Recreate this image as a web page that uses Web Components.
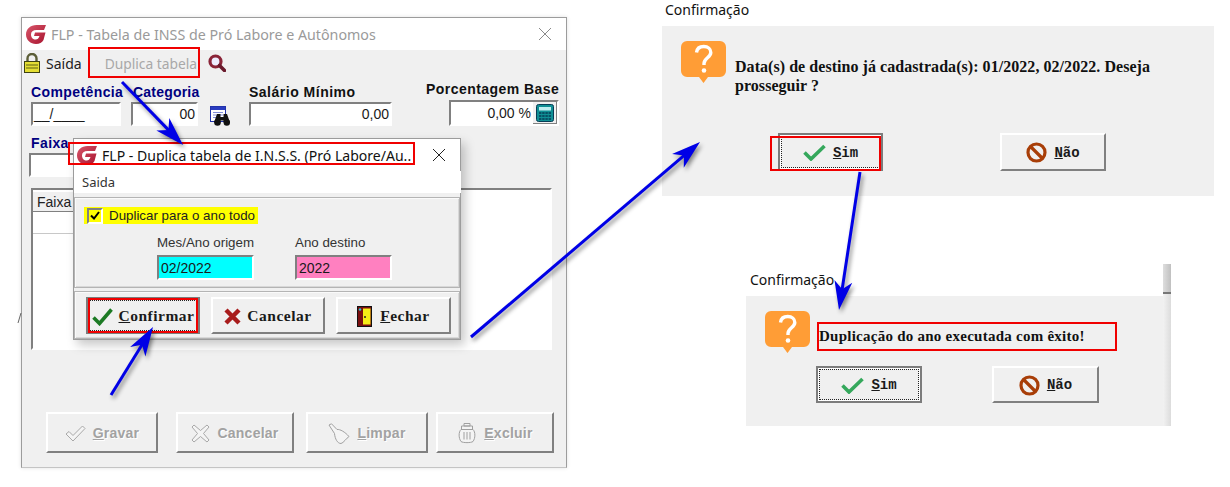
<!DOCTYPE html>
<html lang="pt-BR">
<head>
<meta charset="utf-8">
<title>FLP - Duplica tabela</title>
<style>
  html, body { margin: 0; background: #fff; }
  body { width: 1230px; height: 487px; overflow: hidden; position: relative; font-family: "Liberation Sans", Arial, sans-serif; }
</style>
</head>
<body>
<script>
const icons = {
  logo: `<svg width="20" height="20" viewBox="0 0 20 20"><defs><linearGradient id="lg" x1="0" y1="0" x2="1" y2="1"><stop offset="0" stop-color="#d8566a"/><stop offset="1" stop-color="#a8142f"/></linearGradient></defs><path d="M20 1H10.5C4.5 1 0 5 0 10.5S4.5 20 10 20C13.5 20 16 18.5 17.5 16L19.5 8.5H9L8 12H13.5C12.7 14.5 11.5 15.5 9.7 15.5 7 15.5 5 13.5 5 10.5S7 6 10.5 6H18Z" fill="url(#lg)"/></svg>`,
  lock: `<svg width="16" height="20" viewBox="0 0 16 20"><path d="M3.5 9V5.5a4.5 4.5 0 0 1 9 0V9" fill="none" stroke="#5c5e38" stroke-width="2.4"/><rect x=".5" y="8.5" width="15" height="11" fill="#e4de34" stroke="#3e4212"/><path d="M2 12h12M2 15h12" stroke="#8b8a1c" stroke-width="1.4"/></svg>`,
  search: `<svg width="18" height="18" viewBox="0 0 18 18"><circle cx="7.5" cy="7.5" r="5.5" fill="#eef" stroke="#8a2438" stroke-width="3.2"/><path d="M11.5 11.5 16.5 16.5" stroke="#6a1a2c" stroke-width="3.6" stroke-linecap="round"/></svg>`,
  binoculars: `<svg width="21" height="20" viewBox="0 0 21 20"><rect x=".5" y=".5" width="15" height="15" fill="#fff" stroke="#2233aa"/><rect x="1" y="1" width="14" height="3" fill="#2a3cc0"/><path d="M3 6.5h10M3 9h10M3 11.5h3" stroke="#7f8cd8"/><path d="M7 8h3.5v3h3V8H17l3 8.5h-6.500v-2h-3v2H4Z" fill="#111"/><circle cx="7.500" cy="16.500" r="3.300" fill="#111"/><circle cx="16.800" cy="16.500" r="3.200" fill="#111"/></svg>`,
  calc: `<svg width="18" height="18" viewBox="0 0 18 18"><rect x=".5" y=".5" width="17" height="17" rx="2" fill="#0f8f94" stroke="#063c55"/><rect x="3" y="3" width="12" height="3.5" fill="#bfeef0"/><path d="M3 9h12M3 12h12M3 15h12" stroke="#063c55" stroke-width="1.6" stroke-dasharray="2.4 .8"/></svg>`,
  check: `<svg width="21" height="19" viewBox="0 0 21 19"><path d="M1.5 10.5 7.5 16.5 19.5 2.5" fill="none" stroke="#1c7a24" stroke-width="3.6"/></svg>`,
  checkSoft: `<svg width="23" height="17" viewBox="0 0 23 17"><path d="M1.5 8.5 8 15 21.5 2" fill="none" stroke="#35a85c" stroke-width="3.6"/></svg>`,
  cross: `<svg width="17" height="17" viewBox="0 0 17 17"><path d="M2 2 15 15M15 2 2 15" stroke="#a81c1c" stroke-width="4.4"/></svg>`,
  door: `<svg width="15" height="21" viewBox="0 0 15 21"><rect x=".5" y=".5" width="14" height="20" fill="#7a0f0f" stroke="#111"/><path d="M6 2.5h7.5v16H6Z" fill="#f6ee16"/><circle cx="3" cy="3.5" r="1.2" fill="#29c7d8"/><circle cx="8" cy="11" r="1" fill="#222"/></svg>`,
  no: `<svg width="21" height="21" viewBox="0 0 21 21"><circle cx="10.5" cy="10.5" r="8.5" fill="none" stroke="#a83e08" stroke-width="3.2"/><path d="M4.5 4.5 16.5 16.5" stroke="#a83e08" stroke-width="3.2"/></svg>`,
  ghostCheck: `<svg width="21" height="17" viewBox="0 0 21 17"><path d="M1 9 4 6.5 8 10.5 17.5 1 20 3.5 8 16Z" fill="#f4f4f4" stroke="#a8a8a8"/></svg>`,
  ghostCross: `<svg width="19" height="19" viewBox="0 0 19 19"><path d="M3 1 9.5 6.5 16 1 18 3 12.5 9.5 18 16 16 18 9.5 12.5 3 18 1 16 6.5 9.5 1 3Z" fill="#f4f4f4" stroke="#a8a8a8"/></svg>`,
  ghostBroom: `<svg width="22" height="21" viewBox="0 0 22 21"><path d="M1 2 3.5 .8 9 6.5C12 6 17 9 21 13.5 18.5 15 15.5 20 13 20.5 9.500 20.500 7 16 6.500 10.500Z" fill="#f4f4f4" stroke="#a0a0a0"/></svg>`,
  ghostTrash: `<svg width="20" height="22" viewBox="0 0 20 22"><path d="M7 1.500h6v2.500H7ZM4.500 4h11v3.500h-11ZM4 7.500h12C18.500 10 18.500 16 16 19.500 14 21 6 21 4 19.500 1.500 16 1.500 10 4 7.500Z" fill="#f4f4f4" stroke="#a0a0a0"/><path d="M7 10v7.500M10 10v7.500M13 10v7.500" stroke="#a0a0a0"/></svg>`,
  question: `<svg width="45" height="42" viewBox="0 0 45 42"><path d="M6 0H39A6 6 0 0 1 45 6V30A6 6 0 0 1 39 36H27L22.5 42 18 36H6A6 6 0 0 1 0 30V6A6 6 0 0 1 6 0Z" fill="#ff9d36"/><path d="M15.5 11.5C16 7.5 19 5.5 22.8 5.5 27 5.5 29.8 8 29.8 11.4 29.8 16.5 23 17 23 22.5V24" fill="none" stroke="#fff" stroke-width="3.4"/><circle cx="23" cy="29.5" r="2.3" fill="#fff"/></svg>`
}

// janela do sistema: barra de titulo + conteudo
class FlpWindow extends HTMLElement {
  constructor () {
    super()
    this.shadow = this.attachShadow({ mode: 'open' })
  }

  connectedCallback () {
    const inactive = this.hasAttribute('inactive')
    this.shadow.innerHTML = `
      <style>
        :host {
          position: absolute;
          left: var(--x); top: var(--y); width: var(--w); height: var(--h);
          box-sizing: border-box;
          display: flex;
          flex-direction: column;
          background: #f0f0f0;
          border: 1px solid #9c9c9c;
          border-bottom-color: var(--edge, #c4c4c4);
          box-shadow: var(--shadow, 0 0 4px rgba(0, 0, 0, .12));
        }
        .title {
          height: 32px;
          flex: none;
          display: flex;
          align-items: center;
          background: #fff;
          padding: 0 14px 0 var(--title-pad, 4px);
          gap: 5px;
          font: var(--title-size, 14.25px) "Noto Sans", "Open Sans", sans-serif;
          color: ${inactive ? '#9a9a9a' : '#111'};
        }
        .title span { flex: 1; white-space: nowrap; }
        svg.close { flex: none; }
      </style>
      <div class="title">
        ${icons.logo}
        <span>${this.getAttribute('title-text')}</span>
        <svg class="close" width="14" height="14" viewBox="0 0 14 14"><path d="M1 1 13 13M13 1 1 13" stroke="${inactive ? '#8a8a8a' : '#222'}" stroke-width="1"/></svg>
      </div>
      <slot></slot>
    `
  }
}

// botao classico em relevo
class WinButton extends HTMLElement {
  constructor () {
    super()
    this.shadow = this.attachShadow({ mode: 'open' })
  }

  connectedCallback () {
    const label = this.getAttribute('label')
    const key = this.getAttribute('key') || ''
    const i = label.indexOf(key)
    const text = key ? `${label.slice(0, i)}<u>${key}</u>${label.slice(i + key.length)}` : label
    this.shadow.innerHTML = `
      <style>
        :host {
          display: block;
          flex: none;
          box-sizing: border-box;
          width: var(--w);
          height: var(--h);
          background: #f0f0f0;
          border: 2px solid;
          border-color: #fff #808080 #808080 #fff;
          font: var(--font, bold 15.5px "Liberation Serif", serif);
          letter-spacing: var(--ls, .5px);
          color: #1a1a1a;
        }
        :host([focused]) { border-color: #7c7c7c; box-shadow: inset 1px 1px 0 #fff, inset -1px -1px 0 #fff; }
        :host([disabled]) { color: #a2a2a2; text-shadow: 1px 1px 0 #fff; }
        .face {
          box-sizing: border-box;
          height: 100%;
          display: flex;
          align-items: center;
          justify-content: center;
          gap: var(--gap, 6px);
          padding-top: var(--face-top, 0);
        }
        :host([focused]) .face { border: 1px dotted #222; margin: 1px; height: calc(100% - 2px); }
        svg { display: block; flex: none; }
      </style>
      <div class="face">${icons[this.getAttribute('icon')]}<span>${text}</span></div>
    `
  }
}

// campo com rotulo em cima
class LabeledField extends HTMLElement {
  constructor () {
    super()
    this.shadow = this.attachShadow({ mode: 'open' })
  }

  connectedCallback () {
    const label = this.getAttribute('label')
    this.shadow.innerHTML = `
      <style>
        :host {
          display: block;
          flex: none;
          width: var(--w);
        }
        .label {
          height: var(--label-h, 18px);
          line-height: 17px;
          padding-left: var(--label-x, 0);
          white-space: nowrap;
          color: var(--label, #000080);
          font: var(--label-font, bold 14px "Liberation Sans", sans-serif);
          letter-spacing: var(--label-ls, .4px);
        }
        .box {
          box-sizing: border-box;
          height: var(--field-h, 24px);
          margin-left: var(--field-x, 0);
          background: var(--fill, #fff);
          border: 2px solid;
          border-color: #808080 #fff #fff #808080;
          display: flex;
          align-items: center;
          justify-content: var(--justify, flex-end);
          padding: 0 var(--pad, 1px);
          font: 14px "Liberation Sans", sans-serif;
          color: #1a1a1a;
          white-space: nowrap;
        }
      </style>
      ${label ? `<div class="label">${label}</div>` : ''}
      <div class="box">${this.getAttribute('value') || ''}<slot></slot></div>
    `
  }
}

// formulario da janela principal
class InssForm extends HTMLElement {
  constructor () {
    super()
    this.shadow = this.attachShadow({ mode: 'open' })
  }

  connectedCallback () {
    this.shadow.innerHTML = `
      <style>
        :host { display: block; flex: 1; }
        .menu {
          height: 26px;
          display: flex;
          align-items: center;
          padding-left: 2px;
          font: 14px "Noto Sans", sans-serif;
          color: #222;
        }
        .menu .exit { margin-left: 6px; }
        .menu .off { margin-left: 23px; color: #a8a8a8; font-size: 13.8px; }
        .menu svg.find { margin-left: 11px; }
        .menu svg { flex: none; }
        .row { display: flex; padding: 8px 0 0 9px; }
        .cat { margin-left: 10px; --label-x: 2px; --label-ls: .2px; }
        .find-date { margin: 22px 0 0 12px; flex: none; width: 21px; height: 20px; }
        .sal { margin-left: 18px; --label: #111; --label-ls: .5px; }
        .pct { margin: -3px 0 0 34px; --label: #111; --label-ls: .45px; --label-h: 19px; --field-x: 23px; --field-h: 26px; --pad: 0px; }
        .calc {
          width: 24px; height: 22px; margin-left: 2px;
          display: flex; align-items: center; justify-content: center;
          background: #f0f0f0;
          border-right: 1px solid #808080; border-bottom: 1px solid #808080;
          box-sizing: border-box;
        }
        .grid {
          box-sizing: border-box;
          margin: 11px 0 0 9px;
          width: 521px;
          height: 162px;
          background: #fff;
          border: 2px solid;
          border-color: #808080 #fff #fff #808080;
        }
        .head {
          margin: 2px 0 0 0;
          width: 60px;
          height: 20px;
          box-sizing: border-box;
          border-right: 1px solid #808080;
          border-bottom: 1px solid #808080;
          background: #f0f0f0;
          padding-left: 4px;
          font: 14px/20px "Liberation Sans", sans-serif;
          color: #222;
        }
        .line { width: 120px; height: 22px; box-sizing: border-box; border-bottom: 1px solid #c8c8c8; }
        .actions { display: flex; padding: 62px 0 0 24px; align-items: center; --font: bold 14px "Liberation Sans", sans-serif; --ls: .25px; --gap: 7px; --h: 41px; --face-top: 1px; }
      </style>
      <div class="menu">
        ${icons.lock}
        <span class="exit">Saída</span>
        <span class="off">Duplica tabela</span>
        ${icons.search.replace('<svg', '<svg class="find"')}
      </div>
      <div class="row">
        <labeled-field label="Competência" value="__/____" style="--w:90px;--justify:flex-start"></labeled-field>
        <labeled-field class="cat" label="Categoria" value="00" style="--w:67px"></labeled-field>
        <div class="find-date">${icons.binoculars}</div>
        <labeled-field class="sal" label="Salário Mínimo" value="0,00" style="--w:143px"></labeled-field>
        <labeled-field class="pct" label="Porcentagem Base" value="0,00 %" style="--w:133px">
          <div class="calc">${icons.calc}</div>
        </labeled-field>
      </div>
      <div class="row" style="padding:9px 0 0 7px">
        <labeled-field label="Faixa" style="--w:220px;--label-x:2px"></labeled-field>
      </div>
      <div class="grid">
        <div class="head">Faixa</div>
        <div class="line"></div>
      </div>
      <div class="actions">
        <win-button disabled icon="ghostCheck" label="Gravar" key="G" style="--w:112px"></win-button>
        <win-button disabled icon="ghostCross" label="Cancelar" style="--w:118px;margin-left:18px"></win-button>
        <win-button disabled icon="ghostBroom" label="Limpar" key="L" style="--w:122px;margin-left:12px"></win-button>
        <win-button disabled icon="ghostTrash" label="Excluir" key="E" style="--w:118px;margin-left:8px"></win-button>
      </div>
    `
  }
}

// conteudo do dialogo de duplicacao
class DuplicaForm extends HTMLElement {
  constructor () {
    super()
    this.shadow = this.attachShadow({ mode: 'open' })
  }

  connectedCallback () {
    this.shadow.innerHTML = `
      <style>
        :host { display: block; flex: 1; }
        .menu {
          height: 22px;
          background: #fff;
          margin-right: -1px;
          padding-left: 8px;
          font: 13px/23px "Noto Sans", sans-serif;
          color: #333;
        }
        .panel {
          box-sizing: border-box;
          border: 1px solid #b4b4b4;
          box-shadow: inset 1px 1px 0 #fafafa, inset -1px -1px 0 #d8d8d8;
          margin: 4px 0 0 0;
          height: 91px;
          padding: 9px 0 0 9px;
          font: 13.33px "Liberation Sans", sans-serif;
          color: #222;
        }
        .dup {
          display: flex;
          align-items: center;
          width: 174px;
          height: 17px;
          background: #ffff00;
          white-space: nowrap;
        }
        .box {
          box-sizing: border-box;
          width: 16px; height: 16px;
          margin: 0 6px 0 3px;
          flex: none;
          border: 2px solid;
          border-color: #808080 #fff #fff #808080;
          background: #ffff00;
          display: flex; align-items: center; justify-content: center;
        }
        .dates { display: flex; padding: 11px 0 0 73px; --label: #333; --label-font: 13.33px "Liberation Sans", sans-serif; --label-ls: 0; --label-h: 20px; --justify: flex-start; --pad: 2px; --field-h: 25px; }
        .foot {
          box-sizing: border-box;
          border: 1px solid #b4b4b4;
          box-shadow: inset 1px 1px 0 #fafafa, inset -1px -1px 0 #d8d8d8;
          margin-top: 3px;
          height: 48px;
          display: flex;
          align-items: center;
          padding-left: 11px;
          --h: 37px;
          --gap: 6px;
          --face-top: 2px;
        }
      </style>
      <div class="menu">Saida</div>
      <div class="panel">
        <div class="dup">
          <span class="box"><svg width="10" height="9" viewBox="0 0 10 9"><path d="M1 4.5 4 7.5 9 1" fill="none" stroke="#000" stroke-width="2"/></svg></span>
          Duplicar para o ano todo
        </div>
        <div class="dates">
          <labeled-field label="Mes/Ano origem" value="02/2022" style="--w:97px;--fill:#00ffff"></labeled-field>
          <labeled-field label="Ano destino" value="2022" style="--w:97px;--fill:#ff80c0;margin-left:41px"></labeled-field>
        </div>
      </div>
      <div class="foot">
        <win-button focused icon="check" label="Confirmar" key="C" style="--w:114px"></win-button>
        <win-button icon="cross" label="Cancelar" style="--w:114px;margin-left:11px"></win-button>
        <win-button icon="door" label="Fechar" key="F" style="--w:115px;margin-left:11px;--gap:8px"></win-button>
      </div>
    `
  }
}

// caixa de confirmacao recortada (sem borda de janela)
class ConfirmBox extends HTMLElement {
  constructor () {
    super()
    this.shadow = this.attachShadow({ mode: 'open' })
  }

  connectedCallback () {
    this.shadow.innerHTML = `
      <style>
        :host {
          position: absolute;
          left: var(--x); top: var(--y); width: var(--w);
          display: block;
        }
        .cap {
          font: 14px/20px "Noto Sans", "Open Sans", sans-serif;
          color: #111;
          margin-left: var(--cap-x);
          height: var(--cap-h);
        }
        .body {
          box-sizing: border-box;
          height: var(--h);
          background: #f0f0f0;
          padding: 15px 0 0 19px;
        }
        .top { display: flex; }
        .top svg { display: block; flex: none; }
        .msg {
          margin: 16px 0 0 var(--msg-x);
          font: bold var(--msg-size, 15px)/19px "Liberation Serif", serif;
          letter-spacing: var(--msg-ls, .25px);
          color: #111;
          height: 38px;
          white-space: nowrap;
        }
        .btns {
          display: flex;
          margin: var(--btn-y) 0 0 var(--btn-x);
          --font: bold 14px "Liberation Mono", monospace;
          --ls: 0;
          --gap: 7px;
          --face-top: 1px;
        }
      </style>
      <div class="cap">Confirmação</div>
      <div class="body">
        <div class="top">${icons.question}<div class="msg">${this.getAttribute('message')}</div></div>
        <div class="btns"><slot></slot></div>
      </div>
    `
  }
}

// faixa cinza de barra de rolagem ao lado da segunda caixa
class ScrollStrip extends HTMLElement {
  constructor () {
    super()
    this.shadow = this.attachShadow({ mode: 'open' })
    this.shadow.innerHTML = `
      <style>
        :host {
          position: absolute;
          left: 1163px; top: 264px; width: 8px; height: 162px;
          display: block;
          background: linear-gradient(90deg, #f2f2f2, #dcdcdc);
        }
        div { height: 28px; background: linear-gradient(90deg, #dedede, #c0c0c0); border-bottom: 2px solid #777; }
      </style>
      <div></div>
    `
  }
}

// setas azuis e retangulos vermelhos desenhados por cima da montagem
class MarkupLayer extends HTMLElement {
  constructor () {
    super()
    this.shadow = this.attachShadow({ mode: 'open' })
  }

  arrow ([x1, y1, x2, y2]) {
    const len = Math.hypot(x2 - x1, y2 - y1)
    const ux = (x2 - x1) / len
    const uy = (y2 - y1) / len
    const at = (back, side) => `${x2 - ux * back - uy * side},${y2 - uy * back + ux * side}`
    return `
      <line x1="${x1}" y1="${y1}" x2="${x2 - ux * 20}" y2="${y2 - uy * 20}"/>
      <polygon points="${at(0, 0)} ${at(29, 9)} ${at(21, 0)} ${at(29, -9)}"/>
    `
  }

  connectedCallback () {
    const boxes = [
      [89, 48, 110, 29],
      [69, 143, 345, 21],
      [89, 299, 108, 33],
      [771, 137, 109, 33],
      [818, 323, 298, 27]
    ]
    const arrows = [
      [122, 82, 183, 145],
      [111, 395, 153, 327],
      [471, 337, 700, 142],
      [860, 172, 839, 310]
    ]
    this.shadow.innerHTML = `
      <style>
        :host { position: absolute; inset: 0; display: block; pointer-events: none; }
        svg { position: absolute; inset: 0; }
        rect { fill: none; stroke: #f00000; stroke-width: 2; }
        .arrows { filter: drop-shadow(2px 3px 2px rgba(0, 0, 0, .45)); }
        line { stroke: #0000e6; stroke-width: 3; }
        polygon { fill: #0000e6; }
      </style>
      <svg width="1230" height="487">
        <path d="M18 323 21 313" stroke="#666" stroke-width="1"/>
        ${boxes.map(b => `<rect x="${b[0]}" y="${b[1]}" width="${b[2]}" height="${b[3]}"/>`).join('')}
        <g class="arrows">${arrows.map(a => this.arrow(a)).join('')}</g>
      </svg>
    `
  }
}

customElements.define('flp-window', FlpWindow)
customElements.define('win-button', WinButton)
customElements.define('labeled-field', LabeledField)
customElements.define('inss-form', InssForm)
customElements.define('duplica-form', DuplicaForm)
customElements.define('confirm-box', ConfirmBox)
customElements.define('scroll-strip', ScrollStrip)
customElements.define('markup-layer', MarkupLayer)

document.body.innerHTML = `
  <flp-window inactive title-text="FLP - Tabela de INSS de Pró Labore e Autônomos" style="--x:21px;--y:17px;--w:546px;--h:451px">
    <inss-form></inss-form>
  </flp-window>
  <flp-window title-text="FLP - Duplica tabela de I.N.S.S. (Pró Labore/Au.." style="--x:73px;--y:138px;--w:388px;--h:202px;--title-pad:3px;--title-size:14.05px;--edge:#9c9c9c;--shadow:4px 5px 10px rgba(0,0,0,.22)">
    <duplica-form></duplica-form>
  </flp-window>
  <confirm-box message="Data(s) de destino já cadastrada(s): 01/2022, 02/2022. Deseja<br>prosseguir ?" style="--x:662px;--y:0px;--w:552px;--h:170px;--cap-x:3px;--cap-h:26px;--msg-x:9px;--msg-size:16px;--msg-ls:.05px;--btn-x:97px;--btn-y:38px">
    <win-button focused icon="checkSoft" label="Sim" key="S" style="--w:105px;--h:38px"></win-button>
    <win-button icon="no" label="Não" key="N" style="--w:106px;--h:38px;margin-left:117px"></win-button>
  </confirm-box>
  <scroll-strip></scroll-strip>
  <confirm-box message="Duplicação do ano executada com êxito!" style="--x:746px;--y:270px;--w:417px;--h:130px;--cap-x:4px;--cap-h:26px;--msg-x:9px;--btn-x:51px;--btn-y:1px">
    <win-button focused icon="checkSoft" label="Sim" key="S" style="--w:106px;--h:37px"></win-button>
    <win-button icon="no" label="Não" key="N" style="--w:107px;--h:37px;margin-left:70px"></win-button>
  </confirm-box>
  <markup-layer></markup-layer>
`
</script>
</body>
</html>
